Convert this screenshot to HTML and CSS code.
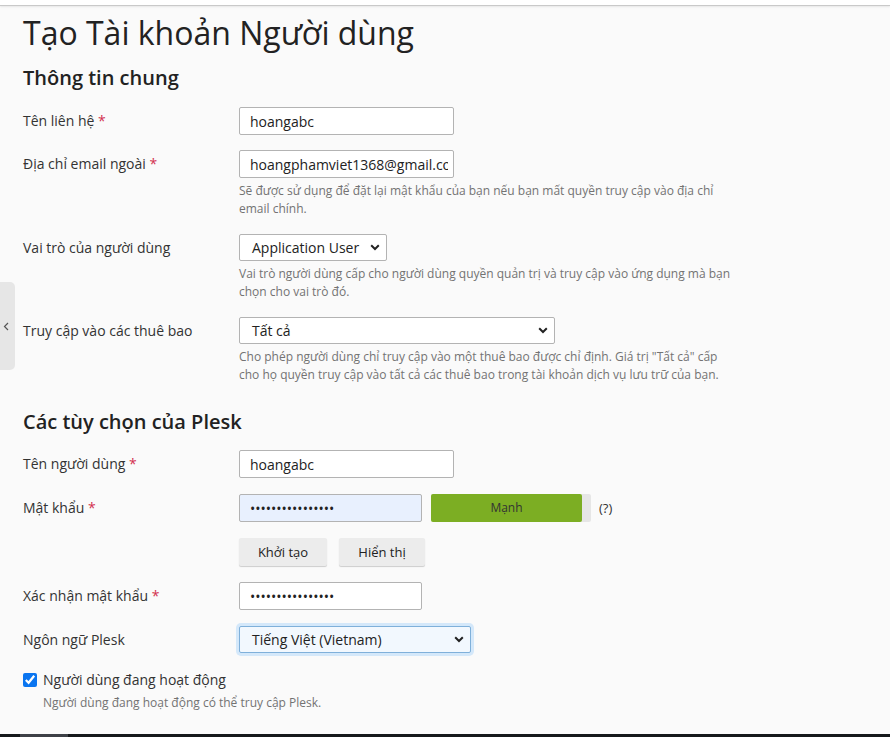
FILE: index.html
```html
<!DOCTYPE html>
<html lang="vi">
<head>
<meta charset="utf-8">
<title>Tạo Tài khoản Người dùng</title>
<link rel="stylesheet" href="styles.css">
</head>
<body>
<div class="page">
  <div class="topbar"></div>
  <div class="side-toggle">
    <svg width="6" height="9" viewBox="0 0 6 9"><path d="M5 1 L1.5 4.5 L5 8" fill="none" stroke="#555" stroke-width="1.2"/></svg>
  </div>
  <main class="content">
    <h1 class="title">Tạo Tài khoản Người dùng</h1>

    <h2 class="section">Thông tin chung</h2>

    <div class="row">
      <label class="lbl">Tên liên hệ <span class="req">*</span></label>
      <div class="ctl">
        <input class="field w215" type="text" value="hoangabc">
      </div>
    </div>

    <div class="row">
      <label class="lbl">Địa chỉ email ngoài <span class="req">*</span></label>
      <div class="ctl">
        <input class="field w215" type="text" value="hoangphamviet1368@gmail.com">
        <div class="hint">Sẽ được sử dụng để đặt lại mật khẩu của bạn nếu bạn mất quyền truy cập vào địa chỉ email chính.</div>
      </div>
    </div>

    <div class="row">
      <label class="lbl">Vai trò của người dùng</label>
      <div class="ctl">
        <div class="select w148">
          <span>Application User</span>
          <svg class="chev" width="10" height="7" viewBox="0 0 10 7"><path d="M1.2 1.3 L5 5 L8.8 1.3" fill="none" stroke="#222" stroke-width="2"/></svg>
        </div>
        <div class="hint">Vai trò người dùng cấp cho người dùng quyền quản trị và truy cập vào ứng dụng mà bạn chọn cho vai trò đó.</div>
      </div>
    </div>

    <div class="row">
      <label class="lbl">Truy cập vào các thuê bao</label>
      <div class="ctl">
        <div class="select w316">
          <span>Tất cả</span>
          <svg class="chev" width="10" height="7" viewBox="0 0 10 7"><path d="M1.2 1.3 L5 5 L8.8 1.3" fill="none" stroke="#222" stroke-width="2"/></svg>
        </div>
        <div class="hint">Cho phép người dùng chỉ truy cập vào một thuê bao được chỉ định. Giá trị "Tất cả" cấp cho họ quyền truy cập vào tất cả các thuê bao trong tài khoản dịch vụ lưu trữ của bạn.</div>
      </div>
    </div>

    <h2 class="section section-2">Các tùy chọn của Plesk</h2>

    <div class="row row-16">
      <label class="lbl">Tên người dùng <span class="req">*</span></label>
      <div class="ctl">
        <input class="field w215" type="text" value="hoangabc">
      </div>
    </div>

    <div class="row row-16">
      <label class="lbl">Mật khẩu <span class="req">*</span></label>
      <div class="ctl">
        <div class="pw-line">
          <input class="field w183 autofill" type="password" value="abcdefghijklmnop">
          <div class="strength"><div class="strength-fill">Mạnh</div></div>
          <span class="help">(?)</span>
        </div>
        <div class="btns">
          <button class="btn w88" type="button">Khởi tạo</button>
          <button class="btn w86" type="button">Hiển thị</button>
        </div>
      </div>
    </div>

    <div class="row row-16">
      <label class="lbl">Xác nhận mật khẩu <span class="req">*</span></label>
      <div class="ctl">
        <input class="field w183" type="password" value="abcdefghijklmnop">
      </div>
    </div>

    <div class="row row-14">
      <label class="lbl">Ngôn ngữ Plesk</label>
      <div class="ctl">
        <div class="select w232 focused">
          <span>Tiếng Việt (Vietnam)</span>
          <svg class="chev" width="10" height="7" viewBox="0 0 10 7"><path d="M1.2 1.3 L5 5 L8.8 1.3" fill="none" stroke="#222" stroke-width="2"/></svg>
        </div>
      </div>
    </div>

    <div class="check-row">
      <label class="check-lbl"><input class="check" type="checkbox" checked> Người dùng đang hoạt động</label>
      <div class="hint check-hint">Người dùng đang hoạt động có thể truy cập Plesk.</div>
    </div>
  </main>
  <div class="taskbar"><div class="task-item"></div></div>
</div>
</body>
</html>
```

FILE: styles.css
```css
* { box-sizing: border-box; }
html, body {
  margin: 0;
  padding: 0;
  background: #fafafa;
}
body {
  font-family: "Open Sans", "Noto Sans", sans-serif;
  color: #333;
  font-size: 14px;
}
.page {
  position: relative;
  height: 737px;
  display: flex;
  flex-direction: column;
  overflow: hidden;
}
.topbar {
  height: 6px;
  background: #fff;
  border-bottom: 1px solid #c9c9c9;
  box-shadow: 0 1px 2px rgba(0,0,0,0.08);
  flex: none;
}
.side-toggle {
  position: absolute;
  left: 0;
  top: 282px;
  width: 15px;
  height: 88px;
  background: #e6e6e6;
  border-radius: 0 5px 5px 0;
  display: flex;
  align-items: center;
  justify-content: center;
  padding-right: 3px;
}
.content {
  flex: 1;
  padding: 0 0 0 23px;
}
.title {
  margin: 7px 0 0;
  font-size: 32px;
  line-height: 40px;
  font-weight: 400;
  color: #222;
}
.section {
  margin: 11px 0 15px;
  font-size: 20px;
  line-height: 28px;
  font-weight: 600;
  color: #222;
}
.section-2 {
  margin-top: 23px;
  margin-bottom: 14px;
}
.row {
  display: flex;
  margin-bottom: 15px;
}
.row-16 { margin-bottom: 16px; }
.row-14 { margin-bottom: 14px; }
.lbl {
  width: 216px;
  flex: none;
  line-height: 28px;
  color: #333;
}
.req { color: #d2314f; }
.ctl {
  display: flex;
  flex-direction: column;
  align-items: flex-start;
}
.field {
  height: 28px;
  border: 1px solid #b3b3b3;
  border-radius: 2px;
  background: #fff;
  padding: 0 5px 0 10px;
  font-family: "Open Sans", "Noto Sans", sans-serif;
  font-size: 14px;
  color: #222;
  outline: none;
}
.autofill { background: #e8f0fe; }
.w215 { width: 215px; }
.w183 { width: 183px; }
.w148 { width: 148px; }
.w316 { width: 316px; }
.w232 { width: 232px; }
.select {
  position: relative;
  height: 27px;
  border: 1px solid #b3b3b3;
  border-radius: 2px;
  background: #fff;
  padding: 0 12px;
  line-height: 25px;
  font-size: 14px;
  color: #222;
}
.select span { display: block; }
.chev {
  position: absolute;
  right: 6px;
  top: 9px;
}
.focused {
  background: #f2f8fe;
  border-color: #7fb0da;
  box-shadow: 0 0 0 3px #d4e8fa;
}
.hint {
  margin-top: 4px;
  margin-bottom: 1px;
  max-width: 496px;
  font-size: 12px;
  line-height: 18px;
  color: #737373;
}
.pw-line {
  display: flex;
  align-items: center;
}
.strength {
  margin-left: 9px;
  width: 160px;
  height: 28px;
  background: #e6e6e6;
  border-radius: 2px;
}
.strength-fill {
  width: 151px;
  height: 28px;
  background: #7cae23;
  border-radius: 2px;
  text-align: center;
  line-height: 28px;
  font-size: 12px;
  color: #333;
}
.help {
  margin-left: 8px;
  font-size: 13px;
  color: #333;
}
.btns {
  display: flex;
  gap: 12px;
  margin-top: 16px;
}
.btn {
  height: 28px;
  border: none;
  border-radius: 2px;
  background: #ececec;
  box-shadow: 0 1px 1px rgba(0,0,0,0.18);
  font-family: "Open Sans", "Noto Sans", sans-serif;
  font-size: 13px;
  color: #222;
  padding: 0;
}
.w88 { width: 88px; }
.w86 { width: 86px; }
.check-lbl {
  display: flex;
  align-items: center;
  gap: 6px;
  line-height: 24px;
  font-size: 14px;
  color: #333;
}
.check {
  margin: 0;
  width: 14px;
  height: 14px;
  accent-color: #0a75f0;
}
.check-hint {
  margin-top: 2px;
  margin-left: 20px;
}
.taskbar {
  flex: none;
  height: 3px;
  background: #15181b;
  padding-left: 20px;
}
.task-item {
  width: 48px;
  height: 3px;
  background: #3d4046;
}
```
